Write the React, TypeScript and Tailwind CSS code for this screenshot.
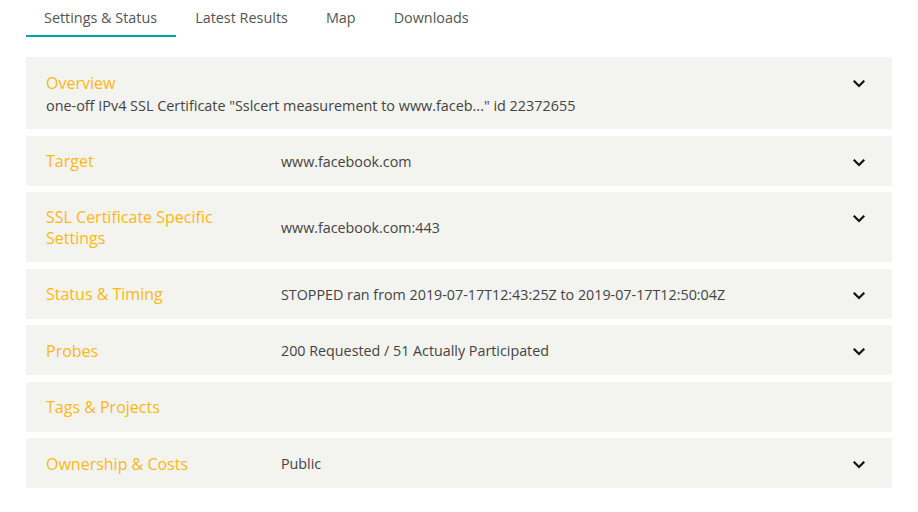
import React from "react";

const Chevron = () => (
  <svg width="12" height="8" viewBox="0 0 12 8" className="block">
    <path d="M1.5 1.5 L6 6 L10.5 1.5" fill="none" stroke="#111" strokeWidth="2.2" strokeLinecap="square" />
  </svg>
);

type Row = { title: string; value?: string; chevron: boolean; h: string };

const rows: Row[] = [
  { title: "Target", value: "www.facebook.com", chevron: true, h: "h-[50px]" },
  { title: "SSL Certificate Specific Settings", value: "www.facebook.com:443", chevron: true, h: "h-[70px]" },
  { title: "Status & Timing", value: "STOPPED ran from 2019-07-17T12:43:25Z to 2019-07-17T12:50:04Z", chevron: true, h: "h-[50px]" },
  { title: "Probes", value: "200 Requested / 51 Actually Participated", chevron: true, h: "h-[50px]" },
  { title: "Tags & Projects", chevron: false, h: "h-[50px]" },
  { title: "Ownership & Costs", value: "Public", chevron: true, h: "h-[50px]" },
];

export default function App() {
  return (
    <div className="w-[918px] h-[512px] bg-white overflow-hidden" style={{ fontFamily: '"Open Sans", sans-serif' }}>
      <div className="pl-[26px] flex h-[37px] text-[14.4px] text-[#555]">
        <div className="pl-[18px] pr-[19px] flex items-center h-[37px] border-b-2 border-[#00a6a6]">Settings &amp; Status</div>
        <div className="px-[19px] flex items-center h-[37px] pb-[2px]">Latest Results</div>
        <div className="px-[19px] flex items-center h-[37px] pb-[2px]">Map</div>
        <div className="px-[19px] flex items-center h-[37px] pb-[2px]">Downloads</div>
      </div>
      <div className="mt-[20px] ml-[26px] w-[866px] flex flex-col gap-[6.5px]">
        <div className="bg-[#f3f3f0] h-[72px] pl-[20px] pr-[27px] pt-[16px] flex justify-between">
          <div>
            <div className="text-[16px] leading-[20px] text-[#fdb813]">Overview</div>
            <div className="text-[14.4px] leading-[20px] mt-[3px] text-[#444]">
              one-off IPv4 SSL Certificate "Sslcert measurement to www.faceb..." id 22372655
            </div>
          </div>
          <div className="pt-[7px]"><Chevron /></div>
        </div>
        {rows.map((r) => (
          <div key={r.title} className={`bg-[#f3f3f0] ${r.h} pl-[20px] pr-[27px] pt-[2px] flex items-center`}>
            <div className="w-[220px] mr-[15px] text-[16px] leading-[21px] text-[#fdb813]">{r.title}</div>
            <div className="flex-1 text-[14.3px] leading-[20px] text-[#444]">{r.value}</div>
            <div className="self-start pt-[21px]">{r.chevron ? <Chevron /> : null}</div>
          </div>
        ))}
      </div>
    </div>
  );
}
